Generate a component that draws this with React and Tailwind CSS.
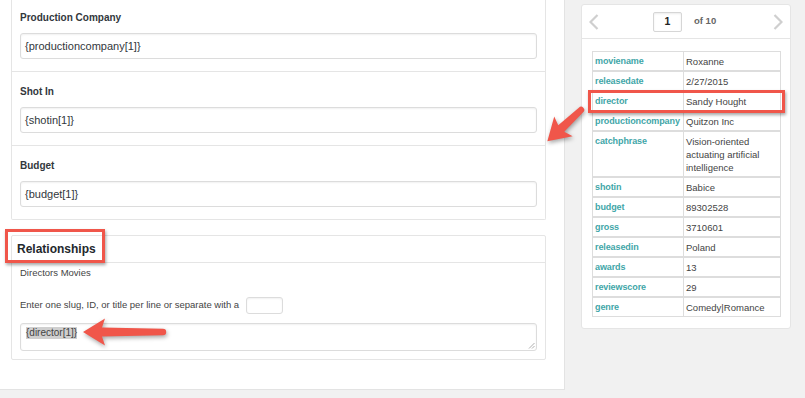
import React from "react";

const rows = [
  ["moviename", "Roxanne"],
  ["releasedate", "2/27/2015"],
  ["director", "Sandy Hought"],
  ["productioncompany", "Quitzon Inc"],
  ["catchphrase", "Vision-oriented actuating artificial intelligence"],
  ["shotin", "Babice"],
  ["budget", "89302528"],
  ["gross", "3710601"],
  ["releasedin", "Poland"],
  ["awards", "13"],
  ["reviewscore", "29"],
  ["genre", "Comedy|Romance"],
];

function Field({ label, value, first, last }) {
  return (
    <div
      className={
        (first ? "pt-[11px] " : "pt-[13px] ") +
        (last ? "" : "border-b border-[#e5e5e5] ") +
        "px-[8px] pb-[12px]"
      }
    >
      <div className="text-[10px] leading-[14px] font-bold text-[#32373c]">{label}</div>
      <div className="mt-[8px] h-[26px] border border-[#dcdcdc] rounded-[3px] shadow-[inset_0_1px_2px_rgba(0,0,0,0.06)] flex items-center px-[4px] text-[11px] text-[#32373c]">
        {value}
      </div>
    </div>
  );
}

function Arrow({ x, y, len, angle }) {
  const L = len;
  const d = `M 0 -3.2 L ${L - 19} -4.4 L ${L - 22} -13.5 L ${L} 0 L ${L - 22} 13.5 L ${L - 19} 4.4 L 0 3.2 A 3.2 3.2 0 0 1 0 -3.2 Z`;
  return <path d={d} fill="#f0564a" transform={`translate(${x} ${y}) rotate(${angle})`} />;
}

export default function App() {
  return (
    <div className="relative w-[805px] h-[398px] overflow-hidden bg-[#f1f1f1] flex font-['Liberation_Sans',Arial,sans-serif]">
      {/* left editor panel */}
      <div className="w-[565px] h-[390px] shrink-0 bg-white border-r border-b border-[#e3e3e3] pl-[11px]">
        <div className="w-[535px] border border-t-0 border-[#e5e5e5] rounded-b-[2px]">
          <Field label="Production Company" value="{productioncompany[1]}" first />
          <Field label="Shot In" value="{shotin[1]}" />
          <Field label="Budget" value="{budget[1]}" last />
        </div>

        <div className="relative mt-[15px] w-[535px] border border-[#e5e5e5] rounded-[2px]">
          <div className="h-[27px] border-b border-[#e5e5e5] flex items-center pl-[5px] text-[12px] font-bold text-[#23282d]">
            Relationships
          </div>
          <div className="absolute left-[-7px] top-[-7px] w-[100px] h-[34px] border-[3px] border-[#f0564a] shadow-[1px_2px_3px_rgba(0,0,0,0.35)]" />
          <div className="px-[8px] pt-[3px] pb-[8px] text-[9.5px] text-[#444]">
            <div className="leading-[14px]">Directors Movies</div>
            <div className="mt-[17px] h-[17px] flex items-center">
              <span>Enter one slug, ID, or title per line or separate with a</span>
              <span className="ml-[7px] w-[37px] h-[17px] border border-[#dcdcdc] rounded-[3px] shadow-[inset_0_1px_2px_rgba(0,0,0,0.06)]" />
            </div>
            <div className="relative mt-[9px] h-[28px] border border-[#dcdcdc] rounded-[3px] shadow-[inset_0_1px_2px_rgba(0,0,0,0.06)] px-[5px] pt-[2px]">
              <span className="inline-block leading-[12px] mt-[1px] bg-[#cfcfcf] text-[10px] text-[#444]">{"{director[1]}"}</span>
              <svg className="absolute right-[1px] bottom-[1px]" width="7" height="7" viewBox="0 0 7 7">
                <path d="M6.5 1 L1 6.5 M6.5 4 L4 6.5" stroke="#999" strokeWidth="0.8" />
              </svg>
            </div>
          </div>
        </div>
      </div>

      {/* right preview column */}
      <div className="pl-[16px] pt-[4px]">
        <div className="w-[210px] h-[325px] bg-white border border-[#e5e5e5] rounded-[3px]">
          <div className="h-[34px] border-b border-[#e5e5e5] flex items-center px-[7px]">
            <svg width="10" height="16" viewBox="0 0 10 16">
              <polyline points="8.5,1 1.5,8 8.5,15" fill="none" stroke="#cfcfcf" strokeWidth="2.2" />
            </svg>
            <div className="ml-[54px] w-[29px] h-[20px] border border-[#d6d6d6] rounded-[2px] shadow-[inset_0_1px_2px_rgba(0,0,0,0.08)] flex items-center justify-center text-[10.5px] font-bold text-[#222]">
              1
            </div>
            <span className="ml-[12px] text-[9.5px] font-bold text-[#666]">of 10</span>
            <svg className="ml-auto" width="10" height="16" viewBox="0 0 10 16">
              <polyline points="1.5,1 8.5,8 1.5,15" fill="none" stroke="#cfcfcf" strokeWidth="2.2" />
            </svg>
          </div>

          <div className="relative mt-[12px] ml-[10px] w-[189px]">
            {rows.map(([k, v]) => (
              <div
                key={k}
                className={
                  (k === "catchphrase" ? "h-[46px] " : "h-[20px] ") +
                  "flex border border-[#dddddd] text-[9.5px] leading-[13.3px]"
                }
              >
                <div className="w-[91px] shrink-0 border-r border-[#dddddd] pl-[2px] pt-[2.5px] font-bold text-[9px] text-[#3fa6a8] whitespace-nowrap tracking-[-0.1px]">
                  {k}
                </div>
                <div className="flex-1 pl-[2px] pr-[2px] pt-[2.5px] text-[#444]">{v}</div>
              </div>
            ))}
            <div className="absolute left-[-4px] top-[39px] w-[197px] h-[23px] border-[3px] border-[#f0564a] shadow-[1px_2px_3px_rgba(0,0,0,0.35)]" />
          </div>
        </div>
      </div>

      {/* annotation arrows */}
      <svg
        className="absolute left-0 top-0 pointer-events-none drop-shadow-[1px_2px_2px_rgba(0,0,0,0.35)]"
        width="805"
        height="398"
      >
        <Arrow x={163} y={332} len={80} angle={180} />
        <Arrow x={581} y={110} len={46} angle={137} />
      </svg>
    </div>
  );
}
